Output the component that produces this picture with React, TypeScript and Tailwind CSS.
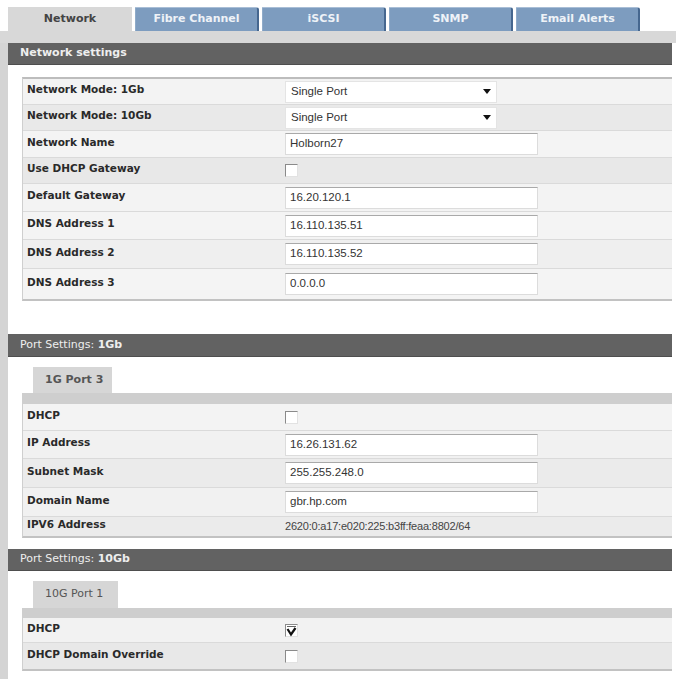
import React from "react";

type Row = {
  label: string;
  kind: "select" | "input" | "check" | "text";
  value?: string;
  checked?: boolean;
  h: string;
  bg: string;
};

const networkRows: Row[] = [
  { label: "Network Mode: 1Gb", kind: "select", value: "Single Port", h: "h-[26px]", bg: "bg-[#f3f3f3]" },
  { label: "Network Mode: 10Gb", kind: "select", value: "Single Port", h: "h-[26px]", bg: "bg-[#e9e9e9]" },
  { label: "Network Name", kind: "input", value: "Holborn27", h: "h-[27px]", bg: "bg-[#f4f4f4]" },
  { label: "Use DHCP Gateway", kind: "check", h: "h-[26px]", bg: "bg-[#e8e8e8]" },
  { label: "Default Gateway", kind: "input", value: "16.20.120.1", h: "h-[28px]", bg: "bg-[#f3f3f3]" },
  { label: "DNS Address 1", kind: "input", value: "16.110.135.51", h: "h-[28px]", bg: "bg-[#f4f4f4]" },
  { label: "DNS Address 2", kind: "input", value: "16.110.135.52", h: "h-[29px]", bg: "bg-[#efefef]" },
  { label: "DNS Address 3", kind: "input", value: "0.0.0.0", h: "h-[30px]", bg: "bg-[#f4f4f4]" },
];

const port1Rows: Row[] = [
  { label: "DHCP", kind: "check", h: "h-[27px]", bg: "bg-[#f3f3f3]" },
  { label: "IP Address", kind: "input", value: "16.26.131.62", h: "h-[28px]", bg: "bg-[#f1f1f1]" },
  { label: "Subnet Mask", kind: "input", value: "255.255.248.0", h: "h-[29px]", bg: "bg-[#ebebeb]" },
  { label: "Domain Name", kind: "input", value: "gbr.hp.com", h: "h-[29px]", bg: "bg-[#f1f1f1]" },
  { label: "IPV6 Address", kind: "text", value: "2620:0:a17:e020:225:b3ff:feaa:8802/64", h: "h-[19px]", bg: "bg-[#ebebeb]" },
];

const port10Rows: Row[] = [
  { label: "DHCP", kind: "check", checked: true, h: "h-[25px]", bg: "bg-[#f2f2f2]" },
  { label: "DHCP Domain Override", kind: "check", h: "h-[26px]", bg: "bg-[#e8e8e8]" },
];

const tabs = ["Network", "Fibre Channel", "iSCSI", "SNMP", "Email Alerts"];

function Checkbox({ checked }: { checked?: boolean }) {
  return (
    <span className="relative w-[13px] h-[13px] bg-white border border-t-[#8a8a8a] border-l-[#8a8a8a] border-r-[#e2e2e2] border-b-[#e2e2e2]">
      {checked && (
        <svg viewBox="0 0 13 13" className="absolute -left-px -top-px w-[13px] h-[13px]">
          <path d="M2.5 5 L6 10.5 L10.5 4" fill="none" stroke="#111" strokeWidth="2.2" />
          <path d="M2 2.5 L11 2.5" stroke="#666" strokeWidth="1" />
        </svg>
      )}
    </span>
  );
}

function Value({ row }: { row: Row }) {
  if (row.kind === "select") {
    return (
      <div className="w-[212px] h-[22px] bg-white border border-[#e4e4e4] flex items-center justify-between pl-[5px] pr-[5px] font-['Liberation_Sans',sans-serif] text-[11.5px] text-[#333]">
        <span>{row.value}</span>
        <svg viewBox="0 0 8 5" className="w-[8px] h-[5px]">
          <path d="M0 0 H8 L4 5 Z" fill="#111" />
        </svg>
      </div>
    );
  }
  if (row.kind === "input") {
    return (
      <div className="w-[253px] h-[22px] bg-white border border-[#dcdcdc] border-t-[#a9a9a9] flex items-center pl-[4px] font-['Liberation_Sans',sans-serif] text-[11.5px] text-[#333]">
        {row.value}
      </div>
    );
  }
  if (row.kind === "check") {
    return <Checkbox checked={row.checked} />;
  }
  return (
    <span className="font-['Liberation_Sans',sans-serif] text-[11px] text-[#444] tracking-[-0.2px]">
      {row.value}
    </span>
  );
}

function Table({ rows, top }: { rows: Row[]; top?: boolean }) {
  return (
    <div
      className={`ml-[14px] border-l border-[#cfcfcf] border-b-2 border-b-[#c2c2c2] ${
        top ? "border-t-2 border-t-[#bdbdbd]" : ""
      }`}
    >
      {rows.map((row, i) => (
        <div
          key={row.label + i}
          className={`flex items-center ${row.h} ${row.bg} ${
            i < rows.length - 1 ? "border-b border-[#dadada]" : ""
          }`}
        >
          <div className="w-[262px] pl-[4px] text-[10.5px] font-bold text-[#2a2a2a] pb-[3px]">
            {row.label}
          </div>
          <div className="flex items-center">
            <Value row={row} />
          </div>
        </div>
      ))}
    </div>
  );
}

function SectionHeader({ children, h }: { children: React.ReactNode; h: string }) {
  return (
    <div
      className={`${h} bg-[#626262] border-b border-[#4e4e4e] text-[#eeeeee] text-[11px] pl-[12px] flex items-center`}
    >
      {children}
    </div>
  );
}

function SubTab({ label, w, h, bold }: { label: string; w: string; h: string; bold?: boolean }) {
  return (
    <div
      className={`ml-[25px] ${w} ${h} bg-[#d6d6d6] flex items-center pl-[12px] text-[11px] text-[#555] ${
        bold ? "font-bold" : ""
      }`}
    >
      {label}
    </div>
  );
}

export default function App() {
  return (
    <div className="w-[676px] h-[679px] bg-white overflow-hidden flex flex-col font-['DejaVu_Sans',sans-serif]">
      {/* Top tabs */}
      <div className="flex items-end h-[31px] pl-[8px] gap-[3px]">
        {tabs.map((t, i) =>
          i === 0 ? (
            <div
              key={t}
              className="w-[124px] h-[24px] bg-[#d8d8d8] flex items-center justify-center text-[11px] font-bold text-[#444]"
            >
              {t}
            </div>
          ) : (
            <div
              key={t}
              className="w-[124px] h-[24px] bg-[#7d9cbf] border-t border-t-[#a9bed6] border-l border-l-[#8fabc9] border-r-2 border-r-[#46678f] rounded-tr-[3px] flex items-center justify-center text-[11px] font-bold text-[#eef2f7]"
            >
              {t}
            </div>
          )
        )}
      </div>
      <div className="h-[12px] bg-[#d8d8d8]" />

      <div className="flex flex-1">
        <div className="w-[8px] bg-[#d4d4d4]" />
        <div className="flex-1 pr-[4px] flex flex-col">
          <SectionHeader h="h-[22px]">
            <span className="font-bold">Network settings</span>
          </SectionHeader>
          <div className="h-[12px]" />
          <Table rows={networkRows} top />

          <div className="h-[33px]" />
          <SectionHeader h="h-[23px]">
            <span>
              Port Settings: <span className="font-bold">1Gb</span>
            </span>
          </SectionHeader>
          <div className="h-[10px]" />
          <SubTab label="1G Port 3" w="w-[79px]" h="h-[26px]" bold />
          <div className="ml-[14px] h-[11px] bg-[#cecece]" />
          <Table rows={port1Rows} />

          <div className="h-[11px]" />
          <SectionHeader h="h-[22px]">
            <span>
              Port Settings: <span className="font-bold">10Gb</span>
            </span>
          </SectionHeader>
          <div className="h-[10px]" />
          <SubTab label="10G Port 1" w="w-[85px]" h="h-[27px]" />
          <div className="ml-[14px] h-[10px] bg-[#cecece]" />
          <Table rows={port10Rows} />
        </div>
      </div>
    </div>
  );
}
